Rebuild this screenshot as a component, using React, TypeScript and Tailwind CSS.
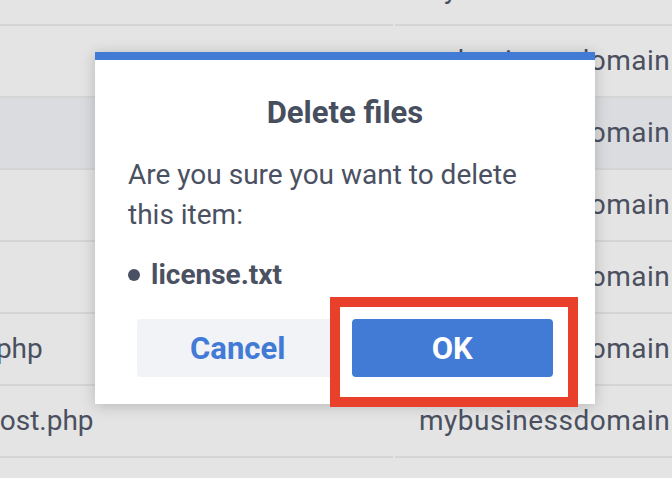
import React from 'react';

const rows = [
  { left: '', leftShift: '', right: 'mybusinessdomain1.com', active: false },
  { left: '', leftShift: '', right: 'mybusinessdomain1.com', active: false },
  { left: '', leftShift: '', right: 'mybusinessdomain1.com', active: true },
  { left: '', leftShift: '', right: 'mybusinessdomain1.com', active: false },
  { left: '', leftShift: '', right: 'mybusinessdomain1.com', active: false },
  { left: 'about.php', leftShift: 'ml-[-83px]', right: 'mybusinessdomain1.com', active: false },
  { left: 'post.php', leftShift: 'ml-[-16px]', right: 'mybusinessdomain1.com', active: false },
  { left: '', leftShift: '', right: '', active: false },
];

export default function App() {
  return (
    <div
      className="relative w-[672px] h-[478px] overflow-hidden bg-[#e4e4e4] text-[#4a5060]"
      style={{ fontFamily: 'Roboto, "Liberation Sans", sans-serif' }}
    >
      {/* file table behind the modal */}
      <div className="flex flex-col mt-[-46px]">
        {rows.map((row, i) => (
          <div key={i} className={row.active ? 'flex bg-[#dbdcdf]' : 'flex'}>
            <div className="w-[393px] h-[72px] border-b-2 border-[#d5d5d5] flex items-center overflow-hidden">
              <span className={'text-[28px] whitespace-nowrap ' + row.leftShift}>{row.left}</span>
            </div>
            <div className="ml-[2px] flex-1 h-[72px] border-b-2 border-[#d5d5d5] flex items-center pl-6 overflow-hidden">
              <span className="text-[28px] tracking-[0.018em] whitespace-nowrap">{row.right}</span>
            </div>
          </div>
        ))}
      </div>

      {/* delete dialog */}
      <div className="absolute left-[95px] top-[52px] w-[500px] h-[352px] bg-white border-t-8 border-[#427bd6] shadow-[0_2px_14px_rgba(0,0,0,0.2)] flex flex-col">
        <h2 className="text-center text-[31px] font-bold text-[#474e5e] mt-[33px] leading-[40px]">Delete files</h2>
        <p className="px-[33px] mt-[22px] text-[28px] leading-[40px] text-[#4a5162]">
          Are you sure you want to delete this item:
        </p>
        <div className="px-[33px] mt-[20px] flex items-center gap-[11px] text-[28px] leading-[40px] font-bold text-[#4a5162]">
          <span className="w-[12px] h-[12px] rounded-full bg-[#4a5162]" />
          <span>license.txt</span>
        </div>
        <div className="flex gap-[13px] px-[42px] mt-[24px]">
          <button className="flex-1 h-[58px] pt-[3px] rounded-[4px] bg-[#f2f3f7] text-[#427bd6] text-[31px] font-bold">Cancel</button>
          <button className="flex-1 h-[58px] pt-[3px] rounded-[4px] bg-[#427bd6] text-white text-[31px] font-bold">OK</button>
        </div>
      </div>

      {/* annotation highlight */}
      <div className="absolute left-[330px] top-[297px] w-[248px] h-[110px] border-[10px] border-[#e8402b]" />
    </div>
  );
}
